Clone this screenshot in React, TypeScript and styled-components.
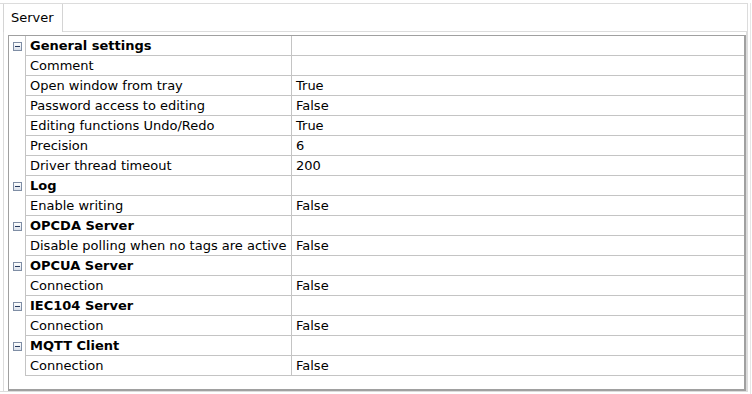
import React from "react";
import styled, { createGlobalStyle } from "styled-components";

const GlobalStyle = createGlobalStyle`
  html, body { margin: 0; padding: 0; background: #ffffff; }
  body { font-family: "DejaVu Sans", Verdana, sans-serif; font-size: 13px; color: #000; }
  * { box-sizing: border-box; }
`;

const Outer = styled.div`
  width: 751px;
  height: 394px;
  border-right: 1px solid #e6e6e6;
  border-bottom: 1px solid #e6e6e6;
`;

const Frame = styled.div`
  margin-top: 3px;
  width: 748px;
  height: 389px;
  border-top: 1px solid #dcdcdc;
  border-right: 1px solid #dcdcdc;
  border-bottom: 1px solid #dcdcdc;
  padding-left: 3px;
  display: flex;
  flex-direction: column;
`;

const TabStrip = styled.div`
  display: flex;
  height: 27px;
`;

const Tab = styled.div`
  width: 60px;
  height: 28px;
  border-left: 1px solid #d4d4d4;
  border-right: 1px solid #d4d4d4;
  background: #fff;
  padding: 6px 0 0 7px;
  line-height: 16px;
  position: relative;
  z-index: 1;
`;

const Panel = styled.div`
  flex: 1;
  width: 744px;
  border-top: 1px solid #dcdcdc;
  border-left: 1px solid #dcdcdc;
  border-right: 1px solid #dcdcdc;
  padding: 3px 0 0 4px;
`;

const Grid = styled.div`
  width: 738px;
  height: 356px;
  border-top: 1px solid #a0a0a0;
  border-left: 1px solid #a0a0a0;
  border-right: 2px solid #a0a0a0;
  border-bottom: 2px solid #a0a0a0;
  background: #fff;
`;

const Row = styled.div`
  display: grid;
  grid-template-columns: 16px 266px 1fr;
  height: 20px;
`;

const Gutter = styled.div`
  display: flex;
  align-items: center;
  justify-content: center;
`;

const Cell = styled.div<{ $bold?: boolean }>`
  border-left: 1px solid #c4c4c4;
  border-bottom: 1px solid #c4c4c4;
  padding: 1px 0 0 4px;
  line-height: 18px;
  font-weight: ${(p) => (p.$bold ? "bold" : "normal")};
  white-space: nowrap;
  overflow: hidden;
`;

const ExpandBox = styled.div`
  width: 9px;
  height: 9px;
  border: 1px solid #7f8ea5;
  background: linear-gradient(#ffffff, #d9e0ea);
  display: flex;
  align-items: center;
  justify-content: center;
  &::after {
    content: "";
    width: 5px;
    height: 1px;
    background: #24385e;
  }
`;

type Item = { cat?: boolean; name: string; value?: string };

const items: Item[] = [
  { cat: true, name: "General settings" },
  { name: "Comment", value: "" },
  { name: "Open window from tray", value: "True" },
  { name: "Password access to editing", value: "False" },
  { name: "Editing functions Undo/Redo", value: "True" },
  { name: "Precision", value: "6" },
  { name: "Driver thread timeout", value: "200" },
  { cat: true, name: "Log" },
  { name: "Enable writing", value: "False" },
  { cat: true, name: "OPCDA Server" },
  { name: "Disable polling when no tags are active", value: "False" },
  { cat: true, name: "OPCUA Server" },
  { name: "Connection", value: "False" },
  { cat: true, name: "IEC104 Server" },
  { name: "Connection", value: "False" },
  { cat: true, name: "MQTT Client" },
  { name: "Connection", value: "False" },
];

export default function App() {
  return (
    <>
      <GlobalStyle />
      <Outer>
        <Frame>
          <TabStrip>
            <Tab>Server</Tab>
          </TabStrip>
          <Panel>
            <Grid>
              {items.map((it, i) => (
                <Row key={i}>
                  <Gutter>{it.cat && <ExpandBox />}</Gutter>
                  <Cell $bold={it.cat}>{it.name}</Cell>
                  <Cell>{it.value ?? ""}</Cell>
                </Row>
              ))}
            </Grid>
          </Panel>
        </Frame>
      </Outer>
    </>
  );
}
